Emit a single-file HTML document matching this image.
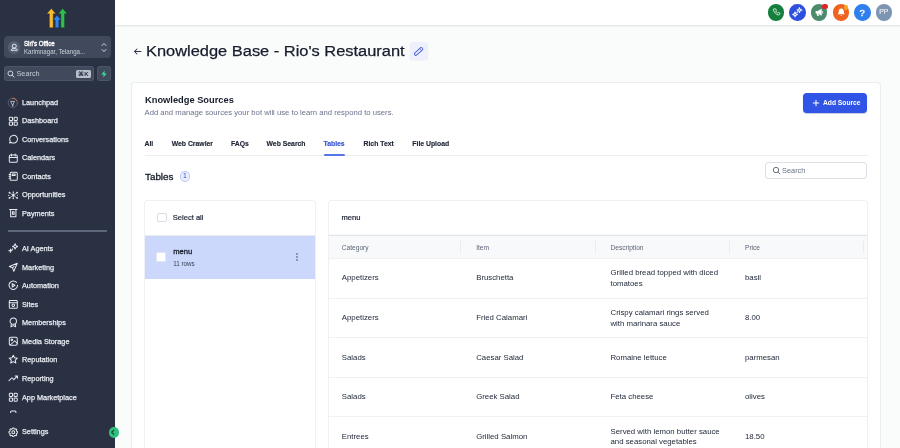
<!DOCTYPE html>
<html lang="en">
<head>
<meta charset="utf-8">
<title>Knowledge Base - Rio's Restaurant</title>
<style>
*{box-sizing:border-box;margin:0;padding:0}
html,body{width:900px;height:448px;overflow:hidden;background:#fafbfb;font-family:"Liberation Sans",sans-serif;color:#1d2433}
#w0{position:absolute;left:0;top:0;width:900px;height:448px;will-change:transform}
#w{position:absolute;left:0;top:0;width:900px;height:448px;transform-origin:0 0;transform:rotate(.001deg)}
.abs{position:absolute}
.t{position:absolute;white-space:nowrap;line-height:1}
#side{position:absolute;left:0;top:0;width:115px;height:448px;background:#2a3143}
#top{position:absolute;left:115px;top:0;width:785px;height:26px;background:#fff;border-bottom:1px solid #e8e9eb;box-shadow:0 1px 0 #f0f1f2}
.nav{position:absolute;left:22px;margin-top:.4px;font-size:7.3px;color:#e8ebf1;white-space:nowrap;line-height:10px;-webkit-text-stroke:.25px #e8ebf1}
.ico{position:absolute;left:7.7px;width:10.6px;height:10.6px;margin-top:-.3px;stroke:#e8ebf1;fill:none;stroke-width:1.9;stroke-linecap:round;stroke-linejoin:round}
.circ{position:absolute;top:4px;width:16.5px;height:16.5px;border-radius:50%}
.circ svg{position:absolute;left:0;top:0;width:16.5px;height:16.5px}
.tab{position:absolute;top:139.200px;-webkit-text-stroke:.15px currentColor;font-size:6.850px;font-weight:700;color:#1d2433;white-space:nowrap;line-height:10px}
.hd{position:absolute;top:243.5px;font-size:6.600px;color:#5b6475;white-space:nowrap;line-height:8px}
.cell{position:absolute;font-size:7.8px;color:#222a3a;white-space:nowrap;line-height:10.6px}
.rowline{position:absolute;left:329px;width:538px;height:1px;background:#eff1f4}
.colsep{position:absolute;top:241px;width:1px;height:12px;background:#e8ebef}
</style>
</head>
<body>
<div id="w0"><div id="w">
<!-- MAIN -->
<div id="top"></div>

<!-- topbar icons -->
<div class="circ" style="left:767.5px;background:#15803d"><svg viewBox="-2 -2 28 28"><path d="M9.3 6.2c.5-.5 1.300-.4 1.700.2l.9 1.500c.3.500.2 1.100-.2 1.500l-.6.6c.8 1.500 1.800 2.500 3.300 3.300l.6-.6c.4-.4 1-.5 1.500-.2l1.500.9c.6.4.7 1.200.2 1.700l-.8.8c-.7.700-1.800.9-2.700.5-3.600-1.600-5.800-3.800-7.400-7.400-.4-.9-.2-2 .5-2.700z" fill="none" stroke="#fff" stroke-width="1.400"/></svg></div>
<div class="circ" style="left:789.2px;background:#2f4fe0"><svg viewBox="0 0 24 24"><path d="M15.200 5.300l1 2.500 2.500 1-2.500 1-1 2.500-1-2.500-2.500-1 2.500-1zM8.800 11.700l1 2.500 2.500 1-2.500 1-1 2.500-1-2.500-2.500-1 2.500-1z" fill="none" stroke="#fff" stroke-width="1.500" stroke-linejoin="round"/><path d="M13 11l-2 2" stroke="#fff" stroke-width="1.500"/></svg></div>
<div class="circ" style="left:810.9px;background:#4c8a6c"><svg viewBox="-1.500 -1.500 27 27"><path d="M6.500 10.500h3l6-3.500v10l-6-3.500h-3zM8 13.500l1 4h2l-1-4" fill="#fff" stroke="#fff" stroke-width="1" stroke-linejoin="round"/><path d="M17.500 10v4" stroke="#fff" stroke-width="1.300" fill="none"/></svg></div>
<div class="abs" style="left:822px;top:3.900px;width:5.500px;height:5.500px;border-radius:50%;background:#e02424"></div>
<div class="circ" style="left:832.5px;background:#f2621f"><svg viewBox="0 0 24 24"><path d="M12 6.500c-2.300 0-3.700 1.700-3.700 4 0 2.500-.8 3.500-1.500 4.300h10.400c-.7-.8-1.500-1.800-1.500-4.300 0-2.300-1.400-4-3.700-4zM10.600 16a1.500 1.500 0 0 0 2.800 0z" fill="#fff"/></svg></div>
<div class="abs" style="left:843.600px;top:5.200px;width:4.800px;height:4.800px;border-radius:50%;background:#f5a623"></div>
<div class="circ" style="left:854px;background:#2f80ed"><div class="t" style="left:0;width:16.5px;text-align:center;top:3.600px;font-size:9.500px;color:#fff;-webkit-text-stroke:.35px #fff">?</div></div>
<div class="circ" style="left:875.5px;background:#7d94b3"><div class="t" style="left:0;width:16.5px;text-align:center;top:4.800px;font-size:6.800px;color:#eef2f8;letter-spacing:-.1px;-webkit-text-stroke:.15px #eef2f8">PP</div></div>

<!-- title -->
<svg class="abs" style="left:132.500px;top:47px;width:9px;height:9px" viewBox="0 0 9 9"><path d="M8 4.500H1.500M4 2L1.500 4.500 4 7" fill="none" stroke="#2a3143" stroke-width="1" stroke-linecap="round" stroke-linejoin="round"/></svg>
<div class="t" id="title" style="left:146px;top:43.400px;font-size:15.2px;color:#161c2b;-webkit-text-stroke:.25px #161c2b;transform-origin:0 0;transform:scaleX(1.081)">Knowledge Base - Rio's Restaurant</div>
<svg class="abs" style="left:405px;top:38px;width:28px;height:28px" viewBox="0 0 28 28"><rect x="4.500" y="4" width="18.700" height="18.800" rx="3.500" fill="#eef1fc"/></svg>
<svg class="abs" style="left:412.300px;top:45px;width:13px;height:13px" viewBox="0 0 13 13"><g transform="rotate(-42 6.500 6.500)"><rect x="1.700" y="5.100" width="9.800" height="2.800" rx=".9" fill="none" stroke="#4a62d8" stroke-width=".95"/><path d="M9.300 5.100v2.800" stroke="#4a62d8" stroke-width=".7"/></g></svg>

<!-- card -->
<div class="abs" style="left:131px;top:82px;width:750px;height:380px;background:#fff;border:1px solid #eaecf0;border-radius:4px"></div>
<div class="t" style="left:144.500px;top:96px;font-size:9.250px;font-weight:700;color:#161c2b;transform-origin:0 0;transform:scaleX(1.005)">Knowledge Sources</div>
<div class="t" style="left:144.500px;top:108.300px;font-size:7.700px;color:#69728a;transform:translateY(.7px)">Add and manage sources your bot will use to learn and respond to users.</div>

<div class="abs" style="left:803.300px;top:92.600px;width:64.200px;height:20.400px;border-radius:3.800px;background:#2f54e6;box-shadow:0 1px 1px rgba(20,40,120,.25)"></div>
<svg class="abs" style="left:812px;top:99px;width:8px;height:8px" viewBox="0 0 8 8"><path d="M4 1.200v5.600M1.200 4h5.600" stroke="#fff" stroke-width="1" stroke-linecap="round"/></svg>
<div class="t" style="left:823px;top:99.600px;font-size:6.700px;font-weight:700;color:#fff">Add Source</div>

<!-- tabs -->
<div class="abs" style="left:144.500px;top:155px;width:723px;height:1px;background:#eceef2"></div>
<div class="tab" style="left:144.500px">All</div>
<div class="tab" style="left:171.700px">Web Crawler</div>
<div class="tab" style="left:231px">FAQs</div>
<div class="tab" style="left:266.500px">Web Search</div>
<div class="tab" style="left:323.500px;color:#3553d8">Tables</div>
<div class="tab" style="left:363.500px">Rich Text</div>
<div class="tab" style="left:412.300px">File Upload</div>
<div class="abs" style="left:323.500px;top:153.600px;width:21.500px;height:2px;background:#5875e4;border-radius:1px"></div>

<!-- Tables heading -->
<div class="t" style="left:144.500px;top:172.800px;font-size:9.200px;color:#161c2b;-webkit-text-stroke:.3px #161c2b;transform-origin:0 0;transform:scaleX(1.07)">Tables</div>
<div class="abs" style="left:179.500px;top:171.200px;width:10.700px;height:10.700px;border-radius:50%;background:#ebeffd;border:.8px solid #b9c6f5"></div>
<div class="t" style="left:179.500px;width:10.700px;text-align:center;top:173.200px;font-size:6.800px;color:#3553d8">1</div>

<!-- search -->
<div class="abs" style="left:765.400px;top:161.500px;width:102px;height:17.900px;border:1px solid #dcdfe5;border-radius:4px;background:#fff"></div>
<svg class="abs" style="left:771.600px;top:166px;width:9px;height:9px" viewBox="0 0 9 9"><circle cx="4" cy="4" r="2.700" fill="none" stroke="#5b6475" stroke-width=".9"/><path d="M6 6l1.800 1.800" stroke="#5b6475" stroke-width=".9" stroke-linecap="round"/></svg>
<div class="t" style="left:782.100px;top:166.700px;font-size:7.350px;color:#667085">Search</div>

<!-- left panel -->
<div class="abs" style="left:144px;top:200px;width:172px;height:260px;background:#fff;border:1px solid #eff0f3;border-radius:4px 4px 0 0"></div>
<div class="abs" style="left:157px;top:212.500px;width:9.500px;height:9.500px;border:1px solid #d8dce3;border-radius:2px;background:#fff"></div>
<div class="t" style="left:172.700px;top:213.500px;font-size:7.600px;color:#222a3a;-webkit-text-stroke:.2px #222a3a">Select all</div>
<div class="abs" style="left:145px;top:235px;width:170px;height:1px;background:#e9ebef"></div>
<div class="abs" style="left:145px;top:235.500px;width:170px;height:43px;background:#cbd8fb"></div>
<div class="abs" style="left:155.800px;top:251.900px;width:9.800px;height:9.800px;border:1px solid #e3e8f5;border-radius:2px;background:#fff"></div>
<div class="t" style="left:173.200px;top:247.700px;font-size:7.600px;color:#161c2b;-webkit-text-stroke:.3px #161c2b">menu</div>
<div class="t" style="left:173.200px;top:260.500px;font-size:6.300px;color:#3a4254">11 rows</div>
<svg class="abs" style="left:295px;top:252px;width:4px;height:10px" viewBox="0 0 4 10"><circle cx="2" cy="2" r=".8" fill="#3a4254"/><circle cx="2" cy="5" r=".8" fill="#3a4254"/><circle cx="2" cy="8" r=".8" fill="#3a4254"/></svg>

<!-- right panel -->
<div class="abs" style="left:328px;top:200px;width:539.500px;height:260px;background:#fff;border:1px solid #eff0f3;border-radius:4px 4px 0 0"></div>
<div class="t" style="left:341.500px;top:213.500px;font-size:7.600px;color:#161c2b;-webkit-text-stroke:.2px #161c2b">menu</div>
<div class="abs" style="left:329px;top:235px;width:537.500px;height:23px;background:#f8f9fb;border-top:1px solid #e1e4e9;box-shadow:0 -1px 1px rgba(0,0,0,.03)"></div>
<div class="hd" style="left:341.800px">Category</div>
<div class="hd" style="left:476.200px">Item</div>
<div class="hd" style="left:610.500px">Description</div>
<div class="hd" style="left:745px">Price</div>
<div class="colsep" style="left:460px"></div>
<div class="colsep" style="left:594.500px"></div>
<div class="colsep" style="left:729px"></div>
<div class="colsep" style="left:863px"></div>

<div class="rowline" style="top:258px"></div>
<div class="rowline" style="top:297.500px"></div>
<div class="rowline" style="top:337.300px"></div>
<div class="rowline" style="top:377px"></div>
<div class="rowline" style="top:416px"></div>

<div class="cell" style="left:341.800px;top:273px">Appetizers</div>
<div class="cell" style="left:476.200px;top:273px">Bruschetta</div>
<div class="cell" style="left:610.500px;top:268px">Grilled bread topped with diced<br>tomatoes</div>
<div class="cell" style="left:745px;top:273px">basil</div>

<div class="cell" style="left:341.800px;top:313px">Appetizers</div>
<div class="cell" style="left:476.200px;top:313px">Fried Calamari</div>
<div class="cell" style="left:610.500px;top:308px">Crispy calamari rings served<br>with marinara sauce</div>
<div class="cell" style="left:745px;top:313px">8.00</div>

<div class="cell" style="left:341.800px;top:352.700px">Salads</div>
<div class="cell" style="left:476.200px;top:352.700px">Caesar Salad</div>
<div class="cell" style="left:610.500px;top:352.700px">Romaine lettuce</div>
<div class="cell" style="left:745px;top:352.700px">parmesan</div>

<div class="cell" style="left:341.800px;top:392px">Salads</div>
<div class="cell" style="left:476.200px;top:392px">Greek Salad</div>
<div class="cell" style="left:610.500px;top:392px">Feta cheese</div>
<div class="cell" style="left:745px;top:392px">olives</div>

<div class="cell" style="left:341.800px;top:432px">Entrees</div>
<div class="cell" style="left:476.200px;top:432px">Grilled Salmon</div>
<div class="cell" style="left:610.500px;top:426.600px">Served with lemon butter sauce<br>and seasonal vegetables</div>
<div class="cell" style="left:745px;top:432px">18.50</div>

<!-- SIDEBAR -->
<div id="side">
<!-- logo -->
<svg class="abs" style="left:46px;top:8px;width:22px;height:21px" viewBox="0 0 22 21">
<g stroke="#1c2130" stroke-width=".35" stroke-linejoin="round">
<path d="M5.300 0.500L0.700 5.800H3.400V19.700H7.200V5.800H9.900Z" fill="#fbbc2c"/>
<path d="M16.700 0.500L12.100 5.800H14.800V19.700H18.600V5.800H21.300Z" fill="#2dbf4a"/>
<path d="M11 7.300L6.900 12H9.200V19.700H12.800V12H15.100Z" fill="#2f86f0"/>
</g></svg>
<!-- office -->
<div class="abs" style="left:4px;top:36px;width:107px;height:22px;border-radius:4px;background:#414a5c"></div>
<div class="abs" style="left:7.500px;top:41px;width:12.500px;height:12.500px;border-radius:50%;background:#566073"></div>
<svg class="abs" style="left:9.500px;top:43px;width:8.500px;height:8.500px" viewBox="0 0 10 10"><circle cx="5" cy="3.700" r="2.400" fill="none" stroke="#eef0f4" stroke-width="1.100"/><path d="M1.400 8.600c.3-1.700 1.600-2.500 3.600-2.500s3.300.8 3.600 2.500z" fill="none" stroke="#eef0f4" stroke-width="1.100" stroke-linejoin="round"/></svg>
<div class="t" style="left:23.500px;top:41.200px;font-size:6.600px;color:#fff;-webkit-text-stroke:.35px #fff;transform-origin:0 0;transform:scaleX(.93)">Siri's Office</div>
<div class="t" style="left:23.500px;top:48.800px;font-size:6.500px;color:#ccd2dc;transform-origin:0 0;transform:scaleX(.94)">Karimnagar, Telanga...</div>
<svg class="abs" style="left:100.500px;top:42px;width:6px;height:11px" viewBox="0 0 6 11"><path d="M1 3.600L3 1.400 5 3.600M1 7.400L3 9.600 5 7.400" fill="none" stroke="#d5dae3" stroke-width=".9" stroke-linecap="round" stroke-linejoin="round"/></svg>
<!-- search -->
<div class="abs" style="left:4px;top:66px;width:90px;height:14.500px;border-radius:3px;background:#414a5c;border:1px solid #4c5568"></div>
<svg class="abs" style="left:6.500px;top:69.500px;width:8px;height:8px" viewBox="0 0 8 8"><circle cx="3.400" cy="3.400" r="2.400" fill="none" stroke="#e8ebf1" stroke-width=".85"/><path d="M5.200 5.200L7.100 7.100" stroke="#e8ebf1" stroke-width=".9" stroke-linecap="round"/></svg>
<div class="t" style="left:16.500px;top:69.500px;font-size:7.300px;color:#c5cbd6">Search</div>
<div class="abs" style="left:76px;top:69.500px;width:15px;height:8px;border-radius:1.500px;background:#b9bfca"></div>
<div class="t" style="left:76px;width:15px;text-align:center;top:70.500px;font-size:6px;font-weight:700;color:#2a3143;letter-spacing:.3px">⌘K</div>
<div class="abs" style="left:96.500px;top:66px;width:14.500px;height:14.500px;border-radius:3px;background:#414a5c;border:1px solid #4c5568"></div>
<svg class="abs" style="left:100px;top:69.500px;width:8px;height:8px" viewBox="0 0 8 8"><path d="M4.800 0.500L1.200 4.500H3.600L3.200 7.500 6.800 3.500H4.400Z" fill="#3ddc97"/></svg>

<svg class="ico" style="top:97.3px;left:7.2px;width:11.600px;height:11.600px;margin-top:-.8px" viewBox="0 0 20 20"><circle cx="10" cy="10" r="8" stroke="#6b7385" stroke-width="1.200"/><path d="M10 2a8 8 0 0 1 7 4.200" stroke="#f08a4b" stroke-width="1.400"/><path d="M7 7.500h6l-3 6.500zM10 14v2" stroke-width="1.200"/></svg><div class="nav" style="top:97.3px">Launchpad</div>
<svg class="ico" style="top:115.8px" viewBox="0 0 20 20"><rect x="2.500" y="2.500" width="6" height="6" rx="1"/><rect x="11.500" y="2.500" width="6" height="6" rx="1"/><rect x="2.500" y="11.500" width="6" height="6" rx="1"/><rect x="11.500" y="11.500" width="6" height="6" rx="1"/></svg><div class="nav" style="top:115.8px">Dashboard</div>
<svg class="ico" style="top:134.3px" viewBox="0 0 20 20"><path d="M3 17l1.200-3.600A7.300 7.300 0 1 1 7 16.200z"/></svg><div class="nav" style="top:134.3px">Conversations</div>
<svg class="ico" style="top:152.8px" viewBox="0 0 20 20"><rect x="2.500" y="4" width="15" height="13.500" rx="2"/><path d="M2.500 8.500h15M6.500 2v3.500M13.500 2v3.500"/></svg><div class="nav" style="top:152.8px">Calendars</div>
<svg class="ico" style="top:171.3px" viewBox="0 0 20 20"><rect x="4" y="2.500" width="13.500" height="15" rx="2"/><path d="M2 6.500h3M2 10h3M2 13.500h3M8 5.500h5.500v3H8z"/></svg><div class="nav" style="top:171.3px">Contacts</div>
<svg class="ico" style="top:189.8px" viewBox="0 0 20 20"><g fill="#e8ebf1" stroke="none"><circle cx="10" cy="10" r="2.400"/><circle cx="2.800" cy="5" r="1.700"/><circle cx="17.200" cy="5" r="1.700"/><circle cx="2.800" cy="15" r="1.700"/><circle cx="17.200" cy="15" r="1.700"/><circle cx="10" cy="4" r="1.300"/><circle cx="10" cy="16" r="1.300"/><circle cx="1.500" cy="10" r="1.200"/><circle cx="18.500" cy="10" r="1.200"/></g><path d="M2.800 5l14.400 10M17.200 5L2.800 15M10 4v12" stroke-width="1.300"/></svg><div class="nav" style="top:189.8px">Opportunities</div>
<svg class="ico" style="top:208.3px" viewBox="0 0 20 20"><path d="M3 3h14M5 3v13.500h10V3M8.500 7h3v5h-3z"/></svg><div class="nav" style="top:208.3px">Payments</div>
<svg class="ico" style="top:243.7px" viewBox="0 0 20 20"><path d="M13.500 1.500l1.500 3.500 3.500 1.500-3.500 1.500-1.500 3.500-1.500-3.500L8.500 6.500l3.500-1.500zM4.500 11.500v6M1.500 14.500h6M8.800 11.200l-1.600 1.600"/></svg><div class="nav" style="top:243.7px">AI Agents</div>
<svg class="ico" style="top:262.2px" viewBox="0 0 20 20"><path d="M17.500 2.500L2.500 8.500l6 2.500 2.500 6.500zM8.500 11l3-3"/></svg><div class="nav" style="top:262.2px">Marketing</div>
<svg class="ico" style="top:280.7px" viewBox="0 0 20 20"><path d="M16 4.500A8 8 0 1 0 18 10"/><path d="M8 6.800v6.400l5-3.200z"/></svg><div class="nav" style="top:280.7px">Automation</div>
<svg class="ico" style="top:299.2px" viewBox="0 0 20 20"><rect x="2.500" y="3" width="15" height="14.500" rx="1.500"/><path d="M2.500 7h15"/><circle cx="10" cy="12" r="2.500"/></svg><div class="nav" style="top:299.2px">Sites</div>
<svg class="ico" style="top:317.7px" viewBox="0 0 20 20"><circle cx="10" cy="7.800" r="6"/><path d="M6.500 13l-1 5.500 4.500-2.300 4.500 2.300-1-5.500"/></svg><div class="nav" style="top:317.7px">Memberships</div>
<svg class="ico" style="top:336.2px" viewBox="0 0 20 20"><rect x="2.500" y="2.500" width="15" height="15" rx="2.500"/><circle cx="7.300" cy="7.300" r="1.500"/><path d="M4.500 17l8-8 5 5"/></svg><div class="nav" style="top:336.2px">Media Storage</div>
<svg class="ico" style="top:354.7px" viewBox="0 0 20 20"><path d="M10 2.200l2.400 5 5.400.7-4 3.800 1 5.400-4.800-2.600-4.800 2.600 1-5.400-4-3.800 5.400-.7z"/></svg><div class="nav" style="top:354.7px">Reputation</div>
<svg class="ico" style="top:373.2px" viewBox="0 0 20 20"><path d="M2 14.500l5.500-5.500 3.500 3.500 7-7M13.500 5.500H18v4.500"/></svg><div class="nav" style="top:373.2px">Reporting</div>
<svg class="ico" style="top:392.600px" viewBox="0 0 20 20"><rect x="2.500" y="2.500" width="6" height="6" rx="1.500"/><rect x="11.500" y="2.500" width="6" height="6" rx="1.500"/><rect x="2.500" y="11.500" width="6" height="6" rx="1.500"/><rect x="11.500" y="11.500" width="6" height="6" rx="1.500"/></svg><div class="nav" style="top:392.300px">App Marketplace</div>
<svg class="ico" style="top:410.2px" viewBox="0 0 20 20"><rect x="5" y="2" width="10" height="16" rx="2"/></svg><div class="nav" style="top:410.2px">Mobile App</div>

<div class="abs" style="left:8px;top:230px;width:99px;height:2px;background:#5d667b"></div>
<!-- settings footer -->
<div class="abs" style="left:0;top:413px;width:115px;height:35px;background:#2a3143"></div>
<svg class="ico" style="top:427px" viewBox="0 0 20 20"><circle cx="10" cy="10" r="2.700"/><path d="M8.92 1.77L11.08 1.77L11.74 3.53L13.34 4.19L15.06 3.42L16.58 4.94L15.81 6.66L16.47 8.26L18.23 8.92L18.23 11.08L16.47 11.74L15.81 13.34L16.58 15.06L15.06 16.58L13.34 15.81L11.74 16.47L11.08 18.23L8.92 18.23L8.26 16.47L6.66 15.81L4.94 16.58L3.42 15.06L4.19 13.34L3.53 11.74L1.77 11.08L1.77 8.92L3.53 8.26L4.19 6.66L3.42 4.94L4.94 3.42L6.66 4.19L8.26 3.53Z"/></svg>
<div class="nav" style="top:427px">Settings</div>
</div>
<div class="abs" style="left:108.500px;top:427.400px;width:10.500px;height:10.500px;border-radius:50%;background:#2fbf7f"></div>
<svg class="abs" style="left:110.400px;top:429.400px;width:6px;height:6.500px" viewBox="0 0 6 6.500"><path d="M3.800 1.200L1.800 3.250 3.800 5.300" fill="none" stroke="#14452f" stroke-width="1.200" stroke-linecap="round" stroke-linejoin="round"/></svg>
</div></div>
</body>
</html>
